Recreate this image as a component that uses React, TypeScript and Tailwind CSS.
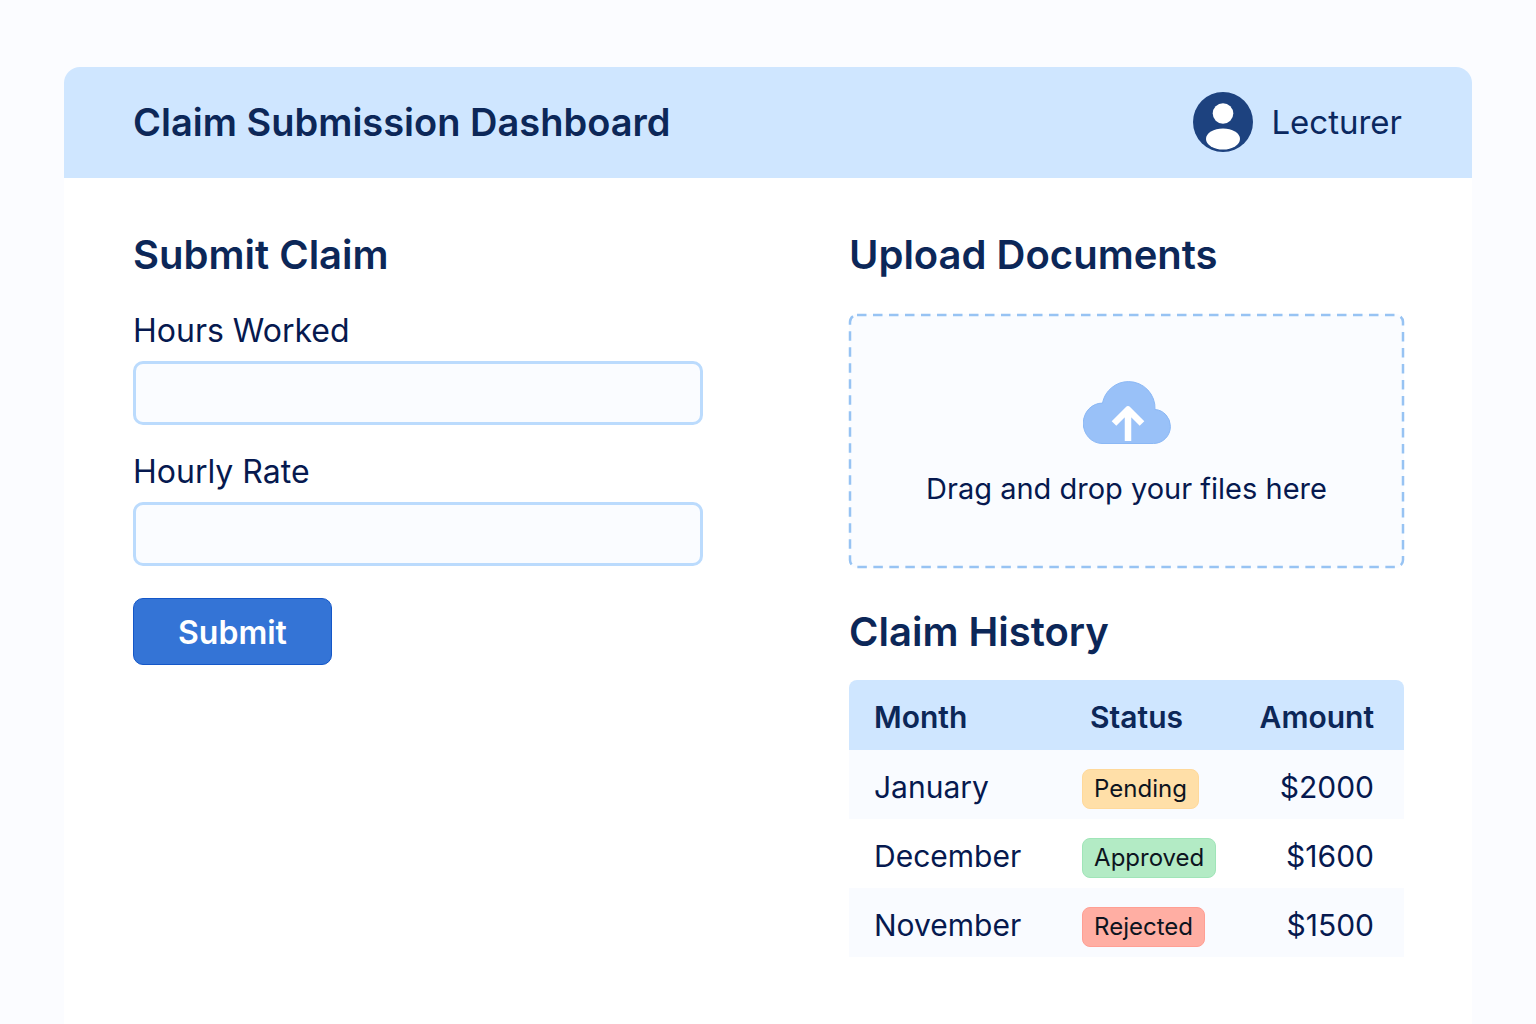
const claims = [
  { month: "January", status: "Pending", amount: "$2000" },
  { month: "December", status: "Approved", amount: "$1600" },
  { month: "November", status: "Rejected", amount: "$1500" },
];

const statusColors: Record<string, string> = {
  Pending: "bg-[#ffdfa8] border-[#ffd99b]",
  Approved: "bg-[#b3ebc5] border-[#a0e5b8]",
  Rejected: "bg-[#ffaea3] border-[#ff9f94]",
};

function Avatar() {
  return (
    <svg className="size-15 shrink-0" viewBox="0 0 60 60" aria-hidden="true">
      <circle cx="30" cy="30" r="30" fill="#1d427f" />
      <circle cx="30" cy="21.500" r="10.300" fill="#fff" />
      <ellipse cx="30" cy="47" rx="17" ry="10.500" fill="#fff" />
    </svg>
  );
}

function CloudUpload() {
  return (
    <svg className="h-16 w-22" viewBox="0 0 88 64" aria-hidden="true">
      <path
        d="M19 62.500A19 20.200 0 0 1 19.500 22.100A26.500 26.500 0 0 1 45.500 0.600A26.500 26.500 0 0 1 72 28.500A16.500 17 0 0 1 87.400 45.500A17 17 0 0 1 70.500 62.500Z"
        fill="#99c1f8"
        stroke="#8bb8f5"
      />
      <path
        d="M45 60V30M31 42.500L45 28.500L59 42.500"
        fill="none"
        stroke="#fff"
        strokeWidth="6.500"
        strokeLinejoin="round"
      />
    </svg>
  );
}

function Field({ id, label }: { id: string; label: string }) {
  return (
    <div className="mb-[23px] flex flex-col">
      <label htmlFor={id} className="mb-1.5 text-[32px] leading-12">
        {label}
      </label>
      <input
        id={id}
        type="text"
        className="h-16 w-full rounded-[10px] border-3 border-[#bbdbfd] bg-[#fafcff] px-5 text-[28px] outline-none focus:border-[#3474d6]"
      />
    </div>
  );
}

export default function App() {
  return (
    <div className="min-h-screen bg-[#fbfcff] px-16 pt-[67px] font-[Inter,sans-serif] text-[#06194f]">
      <div className="flex min-h-[calc(100vh-67px)] flex-col rounded-t-2xl bg-white">
        <header className="flex items-center justify-between rounded-t-2xl bg-[#cfe6ff] pt-[25px] pr-[70px] pb-[26px] pl-[69px]">
          <h1 className="text-[38px] leading-15 font-semibold text-[#0c2758]">Claim Submission Dashboard</h1>
          <div className="flex items-center gap-[18px]">
            <Avatar />
            <span className="text-[33px] leading-15 text-[#0b285f]">Lecturer</span>
          </div>
        </header>

        <main className="grid grid-cols-[570fr_555fr] gap-x-[146px] pt-[53px] pr-[68px] pb-16 pl-[69px]">
          <section>
            <h2 className="mb-7 text-[40px] leading-12 font-semibold text-[#0c2758]">Submit Claim</h2>
            <form onSubmit={(e) => e.preventDefault()}>
              <Field id="hours" label="Hours Worked" />
              <Field id="rate" label="Hourly Rate" />
              <button
                type="submit"
                className="mt-[9px] rounded-[10px] border border-[#1457c8] bg-[#3474d6] px-11 pt-[10px] pb-[7px] text-[32px] leading-12 font-semibold text-white"
              >
                Submit
              </button>
            </form>
          </section>

          <section>
            <h2 className="text-[40px] leading-12 font-semibold text-[#0c2758]">Upload Documents</h2>
            <label className="relative mt-[35px] flex flex-col items-center rounded-lg bg-[#fafcff] pt-[67px] pb-[55px]">
              <svg
                className="pointer-events-none absolute inset-px h-[calc(100%-2px)] w-[calc(100%-2px)] overflow-visible"
                aria-hidden="true"
              >
                <rect
                  width="100%"
                  height="100%"
                  rx="7"
                  fill="none"
                  stroke="#97c3f3"
                  strokeWidth="2.500"
                  strokeDasharray="9.500 6.500"
                />
              </svg>
              <CloudUpload />
              <span className="mt-5 text-[29px] leading-12">Drag and drop your files here</span>
              <input type="file" multiple className="sr-only" />
            </label>

            <h2 className="mt-10 text-[40px] leading-12 font-semibold text-[#0c2758]">Claim History</h2>
            <table className="mt-6 w-full table-fixed text-left text-[30px] leading-10">
              <thead>
                <tr className="h-[70px] bg-[#cfe6ff] text-[#0c2758]">
                  <th className="w-[42%] rounded-tl-lg pt-1 pl-[25px] font-semibold">Month</th>
                  <th className="w-[30%] pt-1 pl-2 font-semibold">Status</th>
                  <th className="rounded-tr-lg pt-1 pr-[30px] text-right font-semibold">Amount</th>
                </tr>
              </thead>
              <tbody>
                {claims.map((c) => (
                  <tr key={c.month} className="h-[69px] odd:bg-[#f9fbff]">
                    <td className="pt-1 pl-[25px]">{c.month}</td>
                    <td className="pt-1.5">
                      <span
                        className={`inline-block rounded-lg border px-[11px] align-middle text-2xl leading-[38px] text-[#0d1420] ${statusColors[c.status]}`}
                      >
                        {c.status}
                      </span>
                    </td>
                    <td className="pt-1 pr-[30px] text-right">{c.amount}</td>
                  </tr>
                ))}
              </tbody>
            </table>
          </section>
        </main>
      </div>
    </div>
  );
}
